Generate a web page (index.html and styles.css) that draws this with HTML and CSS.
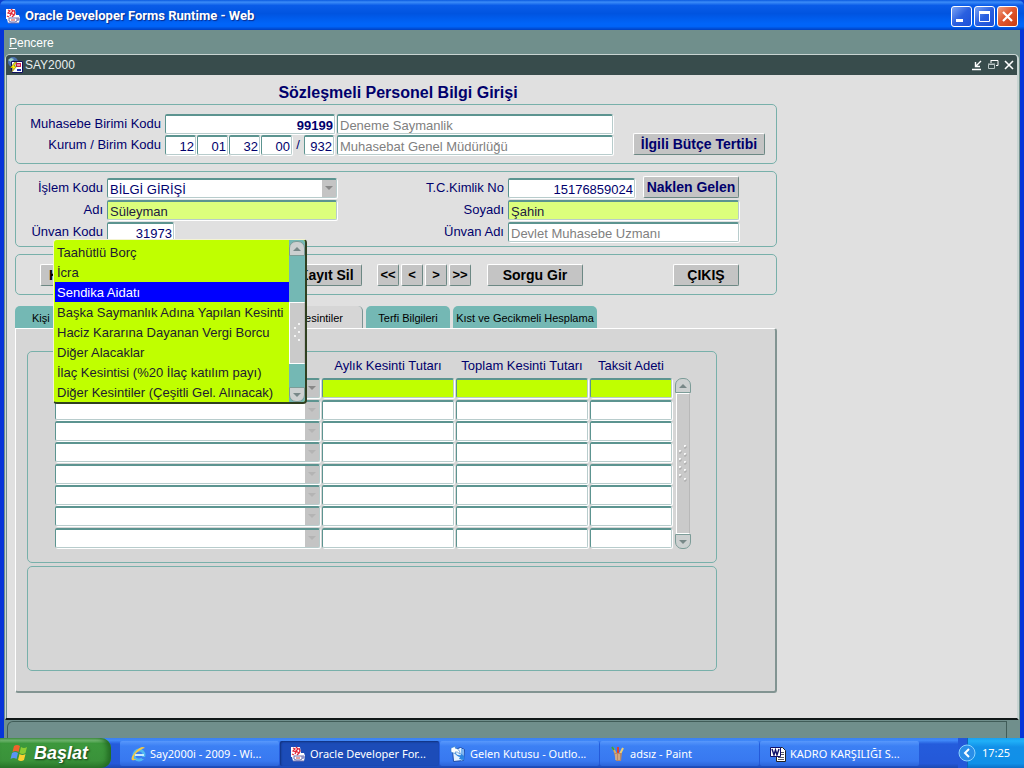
FILE: index.html
```html
<!DOCTYPE html>
<html lang="tr">
<head>
<meta charset="utf-8">
<title>Oracle Developer Forms Runtime - Web</title>
<link rel="stylesheet" href="styles.css">
</head>
<body>
<svg class="defs" aria-hidden="true">
  <symbol id="java" viewBox="0 0 16 16">
    <path d="M1 1h9l1 6h3l1 3-1 5H3l-1-4H1z" fill="#fff"/>
    <path d="M3 2l2 1-2 2 3 1-1 2M6 1l2 2-2 2 3 2-2 2M9 2l1 3-1 2M2 8l2 1" stroke="#e02a3c" stroke-width="1.3" fill="none"/>
    <path d="M4 10h8v3l-2 1H6l-2-1zM12 10h2v2h-2M3 15h11" stroke="#6a6fb0" fill="none"/>
    <path d="M6 12h4" stroke="#c44" />
  </symbol>
</svg>
<div class="window">
  <header class="titlebar">
    <svg class="icon"><use href="#java"/></svg>
    <h1 class="titlebar-text">Oracle Developer Forms Runtime - Web</h1>
    <div class="caption-buttons">
      <button class="caption" aria-label="Simge durumuna küçült"><svg viewBox="0 0 19 19"><path d="M4 12h7v3H4z" fill="#fff"/></svg></button>
      <button class="caption" aria-label="Ekranı kapla"><svg viewBox="0 0 19 19"><path d="M4.500 5.500h10v9h-10z" fill="none" stroke="#fff"/><path d="M4 4h11v3H4z" fill="#fff"/></svg></button>
      <button class="caption caption-close" aria-label="Kapat"><svg viewBox="0 0 19 19"><path d="M5 5l9 9M14 5l-9 9" stroke="#fff" stroke-width="2.2"/></svg></button>
    </div>
  </header>
  <div class="client">
    <nav class="menubar"><button class="menu"><u>P</u>encere</button></nav>
    <section class="mdi">
      <div class="mdi-title">
        <svg class="icon" viewBox="0 0 16 16"><circle cx="6" cy="5" r="5" fill="#4a6fae"/><path d="M1 3l3-2 3 1-3 3zM7 5l4-2" fill="#9bd0c8"/><path d="M4.500 4.500h11v11h-11z" fill="#fff" stroke="#101060"/><path d="M9 6h5v4H9z" fill="#d02050"/><path d="M10 8h3" stroke="#fff"/><path d="M10 13h4" stroke="#2030b0" stroke-width="2"/><path d="M8 5L3 11h3l-2 5 6-7H7l3-4z" fill="#fff000" stroke="#333" stroke-width=".5"/></svg>
        <span>SAY2000</span>
        <div class="mdi-buttons">
          <button class="mdi-button" aria-label="Küçült"><svg viewBox="0 0 12 12"><path d="M1 10.500h9M10 2L5 7M4.500 3v4.500H9" fill="none" stroke="#fff" stroke-width="1.4"/></svg></button>
          <button class="mdi-button" aria-label="Geri yükle"><svg viewBox="0 0 12 12"><path d="M4 1.500h7v5H9M4 1v3" fill="none" stroke="#fff"/><path d="M1.500 5.500h6v4h-6zM1 5h7" fill="none" stroke="#b8c4c4"/></svg></button>
          <button class="mdi-button" aria-label="Kapat"><svg viewBox="0 0 12 12"><path d="M2 2l8 8M10 2l-8 8" stroke="#fff" stroke-width="1.6"/></svg></button>
        </div>
      </div>
      <main class="canvas">
        <form class="form">
          <h2 class="form-title">Sözleşmeli Personel Bilgi Girişi</h2>

          <section class="group unit">
            <div class="unit-fields">
              <label for="mbk">Muhasebe Birimi Kodu</label>
              <input id="mbk" class="field num strong" value="99199">
              <input class="field muted" value="Deneme Saymanlik" aria-label="Muhasebe birimi adı">
              <label for="kbk">Kurum / Birim Kodu</label>
              <div class="codes">
                <input id="kbk" class="field num" value="12">
                <input class="field num" value="01" aria-label="Kurum kodu 2">
                <input class="field num" value="32" aria-label="Kurum kodu 3">
                <input class="field num" value="00" aria-label="Kurum kodu 4">
                <span>/</span>
                <input class="field num" value="932" aria-label="Birim kodu">
              </div>
              <input class="field muted" value="Muhasebat Genel Müdürlüğü" aria-label="Kurum adı">
            </div>
            <button type="button" class="btn navy budget">İlgili Bütçe Tertibi</button>
          </section>

          <section class="group person">
            <div class="person-left">
              <label for="islem">İşlem Kodu</label>
              <span class="combo"><select id="islem" class="field"><option>BİLGİ GİRİŞİ</option></select></span>
              <label for="adi">Adı</label>
              <input id="adi" class="field lime" value="Süleyman">
              <label for="unvan">Ünvan Kodu</label>
              <input id="unvan" class="field num title-code" value="31973">
            </div>
            <div class="person-right">
              <label for="tc">T.C.Kimlik No</label>
              <div class="id-row"><input id="tc" class="field num" value="15176859024"><button type="button" class="btn navy transfer">Naklen Gelen</button></div>
              <label for="soyadi">Soyadı</label>
              <input id="soyadi" class="field lime" value="Şahin">
              <label for="unvanadi">Ünvan Adı</label>
              <input id="unvanadi" class="field muted" value="Devlet Muhasebe Uzmanı">
            </div>
          </section>

          <section class="group actions">
            <button type="button" class="btn save">K</button>
            <button type="button" class="btn remove">Kayıt Sil</button>
            <div class="pager">
              <button type="button" class="btn">&lt;&lt;</button>
              <button type="button" class="btn">&lt;</button>
              <button type="button" class="btn">&gt;</button>
              <button type="button" class="btn">&gt;&gt;</button>
            </div>
            <button type="button" class="btn query">Sorgu Gir</button>
            <button type="button" class="btn exit">ÇIKIŞ</button>
          </section>

          <div class="tabs" role="tablist">
            <button type="button" class="tab tab-person" role="tab">Kişi</button>
            <button type="button" class="tab active" role="tab" aria-selected="true">Kesintiler</button>
            <button type="button" class="tab tab-terfi" role="tab">Terfi Bilgileri</button>
            <button type="button" class="tab tab-kist" role="tab">Kıst ve Gecikmeli Hesplama</button>
          </div>
          <div class="panel" role="tabpanel">
            <section class="group deductions">
              <div class="grid-wrap">
                <table class="grid">
                  <colgroup><col class="c-type"><col class="c-month"><col class="c-total"><col class="c-count"></colgroup>
                  <thead><tr><th></th><th>Aylık Kesinti Tutarı</th><th>Toplam Kesinti Tutarı</th><th>Taksit Adeti</th></tr></thead>
                  <tbody>
                    <tr class="current"><td><span class="combo"><select class="field" aria-label="Kesinti"><option></option></select></span></td><td><input class="field" aria-label="Aylık"></td><td><input class="field" aria-label="Toplam"></td><td><input class="field" aria-label="Taksit"></td></tr>
                    <tr><td><span class="combo"><select class="field" aria-label="Kesinti"><option></option></select></span></td><td><input class="field" aria-label="Aylık"></td><td><input class="field" aria-label="Toplam"></td><td><input class="field" aria-label="Taksit"></td></tr>
                    <tr><td><span class="combo"><select class="field" aria-label="Kesinti"><option></option></select></span></td><td><input class="field" aria-label="Aylık"></td><td><input class="field" aria-label="Toplam"></td><td><input class="field" aria-label="Taksit"></td></tr>
                    <tr><td><span class="combo"><select class="field" aria-label="Kesinti"><option></option></select></span></td><td><input class="field" aria-label="Aylık"></td><td><input class="field" aria-label="Toplam"></td><td><input class="field" aria-label="Taksit"></td></tr>
                    <tr><td><span class="combo"><select class="field" aria-label="Kesinti"><option></option></select></span></td><td><input class="field" aria-label="Aylık"></td><td><input class="field" aria-label="Toplam"></td><td><input class="field" aria-label="Taksit"></td></tr>
                    <tr><td><span class="combo"><select class="field" aria-label="Kesinti"><option></option></select></span></td><td><input class="field" aria-label="Aylık"></td><td><input class="field" aria-label="Toplam"></td><td><input class="field" aria-label="Taksit"></td></tr>
                    <tr><td><span class="combo"><select class="field" aria-label="Kesinti"><option></option></select></span></td><td><input class="field" aria-label="Aylık"></td><td><input class="field" aria-label="Toplam"></td><td><input class="field" aria-label="Taksit"></td></tr>
                    <tr><td><span class="combo"><select class="field" aria-label="Kesinti"><option></option></select></span></td><td><input class="field" aria-label="Aylık"></td><td><input class="field" aria-label="Toplam"></td><td><input class="field" aria-label="Taksit"></td></tr>
                  </tbody>
                </table>
                <div class="popup">
                  <ul class="options" role="listbox" aria-label="Kesinti türü">
                    <li role="option">Taahütlü Borç</li>
                    <li role="option">İcra</li>
                    <li role="option" class="selected" aria-selected="true">Sendika Aidatı</li>
                    <li role="option">Başka Saymanlık Adına Yapılan Kesinti</li>
                    <li role="option">Haciz Kararına Dayanan Vergi Borcu</li>
                    <li role="option">Diğer Alacaklar</li>
                    <li role="option">İlaç Kesintisi (%20 İlaç katılım payı)</li>
                    <li role="option">Diğer Kesintiler (Çeşitli Gel. Alınacak)</li>
                  </ul>
                  <div class="scrollbar popup-scroll">
                    <span class="arrow up"></span>
                    <span class="thumb"><svg viewBox="0 0 12 20"><path d="M7 0h2v2H7zM3 4h2v2H3zM7 8h2v2H7zM3 12h2v2H3zM7 16h2v2H7z" fill="#f4f4f4"/></svg></span>
                    <span class="arrow down"></span>
                  </div>
                </div>
              </div>
              <div class="scrollbar grid-scroll">
                <span class="arrow up"></span>
                <span class="thumb"><svg viewBox="0 0 12 38"><path d="M7 0h2v2H7zM2 5h2v2H2zM7 8h2v2H7zM2 13h2v2H2zM7 16h2v2H7zM2 21h2v2H2zM7 24h2v2H7zM2 29h2v2H2zM7 33h2v2H7z" fill="#f8f8f8"/><path d="M9 1v2H7M4 6v2H2M9 9v2H7M4 14v2H2M9 17v2H7M4 22v2H2M9 25v2H7M4 30v2H2M9 34v2H7" fill="none" stroke="#999" stroke-width=".6"/></svg></span>
                <span class="arrow down"></span>
              </div>
            </section>
            <section class="group notes"></section>
          </div>
        </form>
      </main>
    </section>
    <div class="statusbar"><span class="status-box"></span></div>
  </div>
</div>
<footer class="taskbar">
  <button class="start"><svg class="flag" viewBox="0 0 19 18"><path d="M4 2q3-2 6 0L8.500 8q-3-2-6 0z" fill="#f0622c"/><path d="M11 3q3 2 6 0l-1.500 6q-3 2-6 0z" fill="#8ccc34"/><path d="M2 9q3-2 6 0l-1.500 6q-3-2-6 0z" fill="#5a94f4"/><path d="M9.500 10q3 2 6 0L14 16q-3 2-6 0z" fill="#fcd030"/></svg><span>Başlat</span></button>
  <div class="tasks">
    <button class="task"><svg class="icon" viewBox="0 0 16 16"><circle cx="9" cy="9" r="5" fill="none" stroke="#50b8f0" stroke-width="3"/><path d="M5 9h9" stroke="#c8ecff" stroke-width="2"/><path d="M11 11h5v2h-4z" fill="#3b7df0"/><path d="M15 2Q12-1 6 5 0 12 2 14q2 1 5-1-4 1-3-2 1-4 5-6 4-3 6-3z" fill="#f4c844"/></svg><span>Say2000i - 2009 - Wi...</span></button>
    <button class="task pressed"><svg class="icon"><use href="#java"/></svg><span>Oracle Developer For...</span></button>
    <button class="task"><svg class="icon" viewBox="0 0 16 16"><path d="M2.500 4.500l8-3 4 2-1 11-10 1z" fill="#e4f2ff" stroke="#1b4aa8"/><path d="M11 2l3 2-1 10-2 1z" fill="#7ab4f0"/><path d="M1 2l5-2-1 2q5 1 5 6Q7 5 5 6l1 2-5-2z" fill="#fff" stroke="#2878c8" stroke-width=".6"/><path d="M14 14l-5-1 1-2q-4-1-5-4 3 3 6 2l-1-2 4 3z" fill="#2e86e0"/></svg><span>Gelen Kutusu - Outlo...</span></button>
    <button class="task"><svg class="icon" viewBox="0 0 16 16"><path d="M3 2l4 8" stroke="#d8b060" stroke-width="2"/><path d="M8 1v9" stroke="#e04030" stroke-width="2"/><path d="M13 2l-4 8" stroke="#f0d070" stroke-width="2"/><path d="M4 7h8l-1 8H6z" fill="#b88868"/><path d="M6 8v6M9 8v6" stroke="#e8c8a0"/><path d="M2 1l2 3" stroke="#40a040" stroke-width="2"/></svg><span>adsız - Paint</span></button>
    <button class="task"><svg class="icon" viewBox="0 0 16 16"><path d="M6.500 1.500h6l3 3v11h-9z" fill="#fff" stroke="#222"/><path d="M11 6.500h3M11 8.500h3M8 11.500h6M8 13.500h6" stroke="#556"/><path d="M.5 1.500h10v9H.5z" fill="#fff" stroke="#10106a"/><path d="M2 3l2 6 1.500-5L7 9l2-6" fill="none" stroke="#10106a" stroke-width="1.400"/></svg><span>KADRO KARŞILIĞI S...</span></button>
  </div>
  <div class="tray"><button class="expand" aria-label="Gizli simgeleri göster"><svg viewBox="0 0 18 18"><circle cx="9" cy="9" r="8" fill="#2a8ee8" stroke="#8cd4ff"/><path d="M11 5L7 9l4 4" fill="none" stroke="#fff" stroke-width="2"/></svg></button><time>17:25</time></div>
</footer>
</body>
</html>
```
FILE: styles.css
```css
* { box-sizing: border-box; }
body {
  margin: 0;
  min-height: 100vh;
  display: flex;
  flex-direction: column;
  font: 13px/16px "Liberation Sans", Arial, sans-serif;
  background: #0a3fd0;
}
button, input, select { font: inherit; color: inherit; margin: 0; }
button { padding: 0; border: 0; background: none; white-space: nowrap; }
.defs { position: absolute; width: 0; height: 0; }
.icon { width: 16px; height: 16px; flex: none; }

/* Window frame */
.window { flex: 1; display: flex; flex-direction: column; }
.titlebar {
  height: 30px;
  display: flex;
  align-items: center;
  gap: 4px;
  padding: 2px 6px 0 5px;
  border-radius: 6px 6px 0 0;
  background: linear-gradient(#0a5ae0 0, #3c8cf8 7%, #0a5ce8 18%, #0054e0 45%, #0064f8 78%, #0064f8 88%, #0040c0 100%);
}
.titlebar-text {
  flex: 1;
  margin: 0;
  font: bold 13px/18px Roboto, "Open Sans", sans-serif;
  color: #fff;
  text-shadow: 1px 1px 1px #0a2a88;
}
.caption-buttons { display: flex; gap: 2px; }
.caption {
  width: 21px;
  height: 21px;
  border: 1px solid #fff;
  border-radius: 3px;
  background: linear-gradient(135deg, #7ba4f4, #2a60e0 50%, #1c50d8);
}
.caption svg { display: block; width: 19px; height: 19px; }
.caption-close { background: linear-gradient(135deg, #f0a080, #e05830 45%, #c83c10); }
.client {
  flex: 1;
  display: flex;
  flex-direction: column;
  background: #708f8c;
  border: solid #0634d8;
  border-width: 0 4px;
  padding: 0 1px;
}
.menubar { height: 24px; display: flex; align-items: center; padding: 1px 0 0 4px; }
.menu { color: #fff; font-size: 12px; }
.mdi {
  flex: 1;
  display: flex;
  flex-direction: column;
  border: 1px solid #c8d4d2;
  border-right-width: 2px;
  border-bottom: 2px solid #101818;
  border-radius: 5px 5px 0 0;
  overflow: hidden;
}
.mdi-title {
  height: 20px;
  display: flex;
  align-items: center;
  gap: 2px;
  padding: 0 2px 0 1px;
  background: #384c4c;
  color: #e8eeee;
  font-size: 12px;
}
.mdi-buttons { display: flex; gap: 4px; margin-left: auto; }
.mdi-button { width: 12px; height: 12px; }
.mdi-button svg { display: block; width: 12px; height: 12px; }
.canvas { flex: 1; background: #e0e0e0; border-left: 1px solid #708f8c; padding: 9px 8px 24px; }
.statusbar { height: 18px; padding: 1px 12px 0 2px; }
.status-box { display: block; height: 17px; border: 1px solid #405c58; border-bottom: 0; border-radius: 6px 0 0 0; }

/* Form */
.form { max-width: 762px; color: #00006c; }
.form-title { margin: 0 0 2px; padding-left: 4px; font-size: 16px; line-height: 18px; text-align: center; }
.group { border: 1px solid #78b0aa; border-radius: 5px; }
.field {
  display: block;
  width: 100%;
  height: 20px;
  min-width: 0;
  padding: 2px 1px 0 2px;
  border: 1px solid #b8cccc;
  border-top: 2px solid #5c9490;
  border-left-color: #5c9490;
  border-radius: 2px;
  box-shadow: 1px 1px 0 #fff;
  background: #fff;
  appearance: none;
  outline: 0;
}
.num { text-align: right; }
.strong { font-weight: bold; }
.muted { color: #808080; }
.lime { background: #dcff7c; color: #202040; }
label { text-align: right; white-space: nowrap; }
.combo { position: relative; display: block; }
.combo::before {
  content: "";
  position: absolute;
  top: 2px;
  right: 1px;
  bottom: 1px;
  width: 14px;
  background: #c4c4c4;
  pointer-events: none;
}
.combo::after {
  content: "";
  position: absolute;
  top: 8px;
  right: 4px;
  border: 4px solid transparent;
  border-top-color: #888;
  border-bottom: 0;
  pointer-events: none;
}
.btn {
  height: 22px;
  border: 1px solid #fff;
  border-right-color: #6c8884;
  border-bottom-color: #6c8884;
  border-radius: 2px;
  background: #c4c4c4;
  color: #000;
  font-size: 14px;
  font-weight: bold;
}
.navy { color: #00006c; }

.unit { display: flex; align-items: flex-end; justify-content: space-between; padding: 9px 11px 8px 0; }
.unit-fields { display: grid; grid-template-columns: 145px 170px 276px; gap: 1px 2px; align-items: center; margin-left: 2px; }
.unit-fields .codes { display: grid; grid-template-columns: repeat(4, 31px) 10px 30px; gap: 1px; align-items: center; }
.codes span { text-align: center; }
.unit-fields label { padding-right: 2px; }
.budget { width: 132px; }

.person { display: flex; margin-top: 7px; padding: 6px 37px 4px 0; }
.person-left { display: grid; grid-template-columns: 87px 230px; gap: 2px 4px; align-items: center; }
.person-right { display: grid; grid-template-columns: 1fr 231px; gap: 2px 4px; align-items: center; flex: 1; }
.title-code { width: 67px; }
.id-row { display: flex; gap: 8px; height: 20px; align-items: flex-end; }
.transfer { flex: 0 0 96px; }

.actions { display: flex; margin-top: 7px; padding: 9px 37px 8px 24px; }
.save { width: 72px; padding-left: 8px; text-align: left; }
.remove { width: 72px; margin: 0 15px 0 178px; }
.pager { display: flex; gap: 2px; }
.pager .btn { width: 22px; font-size: 13px; }
.query { width: 96px; margin-left: 16px; }
.exit { width: 66px; margin-left: auto; }

.tabs { display: flex; gap: 3px; margin-top: 11px; color: #000; font-size: 11px; }
.tab { height: 22px; padding: 2px 0 0; border-radius: 5px 5px 0 0; background: #74b8b4; }
.tab-person { width: 104px; padding-left: 17px; text-align: left; }
.tab.active { flex: 0 0 241px; padding-right: 19px; text-align: right; background: #d6d6d6; border-right: 1px solid #7c9494; }
.tab-terfi { width: 84px; }
.tab-kist { width: 144px; }
.panel {
  padding: 22px 58px 20px 11px;
  border: 1px solid #fff;
  border-right: 2px solid #829492;
  border-bottom: 2px solid #829492;
  border-radius: 0 3px 3px 3px;
  background: #d6d6d6;
}
.deductions { display: flex; align-items: flex-end; gap: 1px; padding: 4px 25px 13px 27px; }
.grid-wrap { position: relative; flex: 1; }
.grid { width: 100%; table-layout: fixed; border-collapse: collapse; }
.grid th, .grid td { padding: 0 2px 0 0; vertical-align: top; }
.grid th { height: 22px; padding-top: 2px; font-weight: normal; white-space: nowrap; }
.grid tbody tr { height: 21px; }
.grid tbody tr:nth-child(3n+1) { height: 22px; }
.c-type { width: 267px; }
.c-month, .c-total { width: 134px; }
.current .field { background: #c0ff00; }
.grid tr:not(.current) .combo::after { border-top-color: #b4b4b4; }
.notes { height: 105px; margin-top: 3px; }

/* Scrollbars */
.scrollbar { display: flex; flex-direction: column; width: 16px; }
.arrow { display: flex; align-items: center; justify-content: center; height: 15px; border: 1px solid #7c9c98; background: #ccd0d0; }
.arrow::before { content: ""; border: 4px solid transparent; }
.up { border-radius: 7px 7px 0 0; }
.down { border-radius: 0 0 7px 7px; }
.up::before { border-bottom-color: #788888; border-top: 0; }
.down::before { border-top-color: #788888; border-bottom: 0; }
.thumb { flex: 1; display: flex; align-items: center; justify-content: center; background: #cacaca; border: 1px solid #fff; border-right-color: #b8b8b8; }
.grid-scroll { height: 171px; }
.grid-scroll .thumb { margin: 0 1px; }
.grid-scroll svg { width: 12px; height: 38px; }

/* Drop-down list */
.popup {
  position: absolute;
  left: -2px;
  bottom: 145px;
  z-index: 2;
  width: 254px;
  height: 165px;
  display: flex;
  border: 1px solid #f4f4d0;
  border-right: 2px solid #304020;
  border-bottom: 2px solid #304020;
  border-radius: 4px;
  background: #c0ff00;
  overflow: hidden;
}
.options { flex: 1; margin: 0; padding: 2px 0 0 1px; list-style: none; color: #202030; white-space: nowrap; }
.options li { height: 20px; padding: 3px 0 1px 2px; }
.options .selected { background: #00f; color: #fff; }
.popup-scroll { padding-top: 1px; background: #74b8b4; }
.popup-scroll .thumb { flex: 0 0 62px; margin-top: 46px; }
.popup-scroll .down { margin-top: auto; }
.popup-scroll svg { width: 12px; height: 20px; }

/* Taskbar */
.taskbar {
  height: 30px;
  display: flex;
  background: linear-gradient(#3a80f0 0, #4088f8 8%, #245cdc 20%, #2458d8 85%, #1c48b0);
  color: #fff;
  font: 11px/14px "Noto Sans", "Open Sans", sans-serif;
}
.start {
  width: 111px;
  display: flex;
  align-items: center;
  gap: 5px;
  padding-left: 10px;
  border-radius: 0 10px 10px 0;
  background: linear-gradient(#58a858 0, #7cc07c 7%, #3c983c 18%, #3a923a 75%, #2c7a2c);
  box-shadow: inset -4px 0 5px #246c24;
  font: italic bold 18px/22px "Liberation Sans", Arial, sans-serif;
  text-shadow: 1px 1px 2px #143c14;
}
.flag { width: 19px; height: 18px; }
.tasks { flex: 1; display: flex; gap: 1px; padding: 3px 0 2px 9px; }
.task {
  flex: 0 1 159px;
  min-width: 0;
  display: flex;
  align-items: center;
  gap: 4px;
  padding-left: 10px;
  border-radius: 2px;
  background: linear-gradient(#5898fc, #3c80f4 20%, #3878f0 80%, #2c64d8);
  text-align: left;
}
.pressed { background: #1c4cb8; box-shadow: inset 1px 1px 2px #10307c; }
.tray {
  flex: none;
  display: flex;
  align-items: center;
  gap: 6px;
  width: 66px;
  background: linear-gradient(to right, #2458d8 9px, #0c64b8 9px, #0c64b8 10px, transparent 10px), linear-gradient(#18a0f0, #20b0f8 10%, #1290e8 30%, #1090e8 85%, #0c70c8);
}
.expand, .expand svg { display: block; width: 18px; height: 18px; }
```
